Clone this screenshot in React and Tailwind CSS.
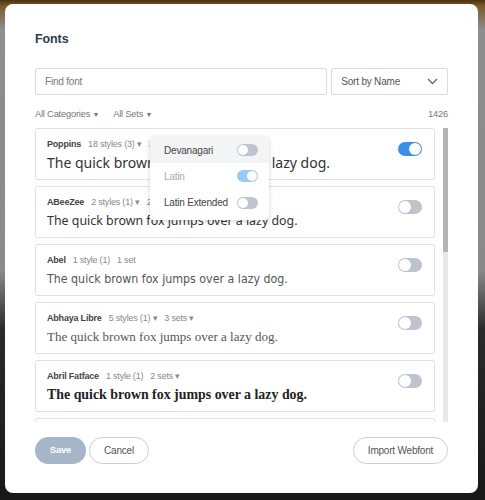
import React from "react";

function Toggle({ on, dim, small }) {
  const track = on ? (dim ? "bg-[#9cc9f3]" : "bg-[#3b8fe4]") : "bg-[#bec4cd]";
  const size = small ? "h-[12px] w-[21px]" : "h-[14px] w-[24px]";
  const knob = small ? "h-[10px] w-[10px]" : "h-[12px] w-[12px]";
  const pos = on ? (small ? "left-[10px]" : "left-[11px]") : "left-[1px]";
  return (
    <div className={`relative shrink-0 rounded-full ${size} ${track}`}>
      <div className={`absolute top-[1px] rounded-full bg-white ${knob} ${pos}`} />
    </div>
  );
}

const fonts = [
  { name: "Poppins", meta: ["18 styles (3) ▾", "3 sets ▾"], sample: "font-['Noto_Sans',sans-serif] text-[14px] text-[#333]", on: true },
  { name: "ABeeZee", meta: ["2 styles (1) ▾", "2 sets ▾"], sample: "font-['Noto_Sans',sans-serif] text-[12.4px] text-[#333]" },
  { name: "Abel", meta: ["1 style (1)", "1 set"], sample: "font-['DejaVu_Sans_Condensed',sans-serif] text-[12.3px] text-[#555]" },
  { name: "Abhaya Libre", meta: ["5 styles (1) ▾", "3 sets ▾"], sample: "font-['Liberation_Serif',serif] text-[13px] text-[#555]" },
  { name: "Abril Fatface", meta: ["1 style (1)", "2 sets ▾"], sample: "font-['Liberation_Serif',serif] font-bold text-[13.9px] tracking-[-0.2px] text-[#222]" },
  { name: "Aclonica", meta: ["1 style (1)", "1 set"], sample: "font-['Liberation_Sans',sans-serif] text-[14px] text-[#333]" },
];

export default function App() {
  return (
    <div className="h-[500px] w-[485px] overflow-hidden bg-[linear-gradient(to_bottom,#4a3210_0px,#7a5a2a_6px,#8e8e8e_30px,#8a8a8a_270px,#2a2a2a_330px,#181818_100%)] pt-[4px] font-['Liberation_Sans',Arial,sans-serif] tracking-[-0.2px]">
      <div className="ml-[5px] flex h-[489px] w-[473px] flex-col rounded-[8px] bg-white px-[30px]">
        <div className="mt-[25px] text-[12.5px] font-bold leading-[20px] tracking-[-0.1px] text-[#2f3a4b]">Fonts</div>

        <div className="mt-[19px] flex gap-[4px]">
          <div className="flex h-[27px] w-[293px] items-center rounded-[2px] border border-[#dcdcdc] px-[9px] text-[10px] text-[#777]">
            Find font
          </div>
          <div className="flex h-[27px] w-[117px] items-center justify-between rounded-[2px] border border-[#dcdcdc] pl-[9px] pr-[9px] text-[10px] text-[#555]">
            <span>Sort by Name</span>
            <svg width="11" height="7" viewBox="0 0 11 7" fill="none">
              <path d="M1 1l4.5 4.5L10 1" stroke="#666" strokeWidth="1.3" />
            </svg>
          </div>
        </div>

        <div className="mt-[12px] flex h-[16px] items-center justify-between text-[9.3px] text-[#777]">
          <div className="flex gap-[14px]">
            <span>All Categories <span className="text-[7px]">▼</span></span>
            <span>All Sets <span className="text-[7px]">▼</span></span>
          </div>
          <span>1426</span>
        </div>

        <div className="relative mt-[5px] flex h-[294px] gap-[8px] overflow-hidden">
          <div className="flex w-[402px] flex-col gap-[6px]">
            {fonts.map((f, i) => (
              <div key={i} className="relative flex h-[52px] shrink-0 flex-col rounded-[2px] border border-[#e2e2e2] px-[11px]">
                <div className="mt-[8px] flex items-center gap-[7px] text-[9px] leading-[14px]">
                  <span className="font-bold text-[#444]">{f.name}</span>
                  {f.meta.map((m, j) => (
                    <span key={j} className="text-[#888]">{m}</span>
                  ))}
                </div>
                <div className={`mt-[2px] whitespace-nowrap leading-[20px] tracking-normal ${f.sample}`}>
                  The quick brown fox jumps over a lazy dog.
                </div>
                <div className="absolute right-[12px] top-[13px]">
                  <Toggle on={f.on} />
                </div>
              </div>
            ))}
          </div>
          <div className="flex w-[5px] flex-col bg-[#e8e8e8]">
            <div className="h-[124px] bg-[#b4b4b4]" />
          </div>

          <div className="absolute left-[115px] top-[9px] w-[119px] rounded-[3px] bg-white text-[10px] shadow-[0_1px_5px_rgba(0,0,0,0.18)]">
            <div className="flex h-[26px] items-center justify-between whitespace-nowrap rounded-t-[3px] bg-[#f3f4f6] pl-[14px] pr-[11px] text-[#444]">
              <span>Devanagari</span>
              <Toggle small />
            </div>
            <div className="flex h-[26px] items-center justify-between whitespace-nowrap pl-[14px] pr-[11px] text-[#aaa]">
              <span>Latin</span>
              <Toggle small on dim />
            </div>
            <div className="flex h-[31px] items-center justify-between whitespace-nowrap pb-[4px] pl-[14px] pr-[11px] text-[#444]">
              <span>Latin Extended</span>
              <Toggle small />
            </div>
          </div>
        </div>

        <div className="mt-[15px] flex items-center justify-between">
          <div className="flex gap-[3px]">
            <div className="flex h-[27px] w-[51px] items-center justify-center rounded-full bg-[#a6b5c7] text-[9.5px] font-bold text-white">
              Save
            </div>
            <div className="flex h-[27px] w-[60px] items-center justify-center rounded-full border border-[#cfcfcf] text-[10px] text-[#555]">
              Cancel
            </div>
          </div>
          <div className="flex h-[27px] w-[95px] items-center justify-center rounded-full border border-[#cfcfcf] text-[10px] text-[#555]">
            Import Webfont
          </div>
        </div>
      </div>
    </div>
  );
}
